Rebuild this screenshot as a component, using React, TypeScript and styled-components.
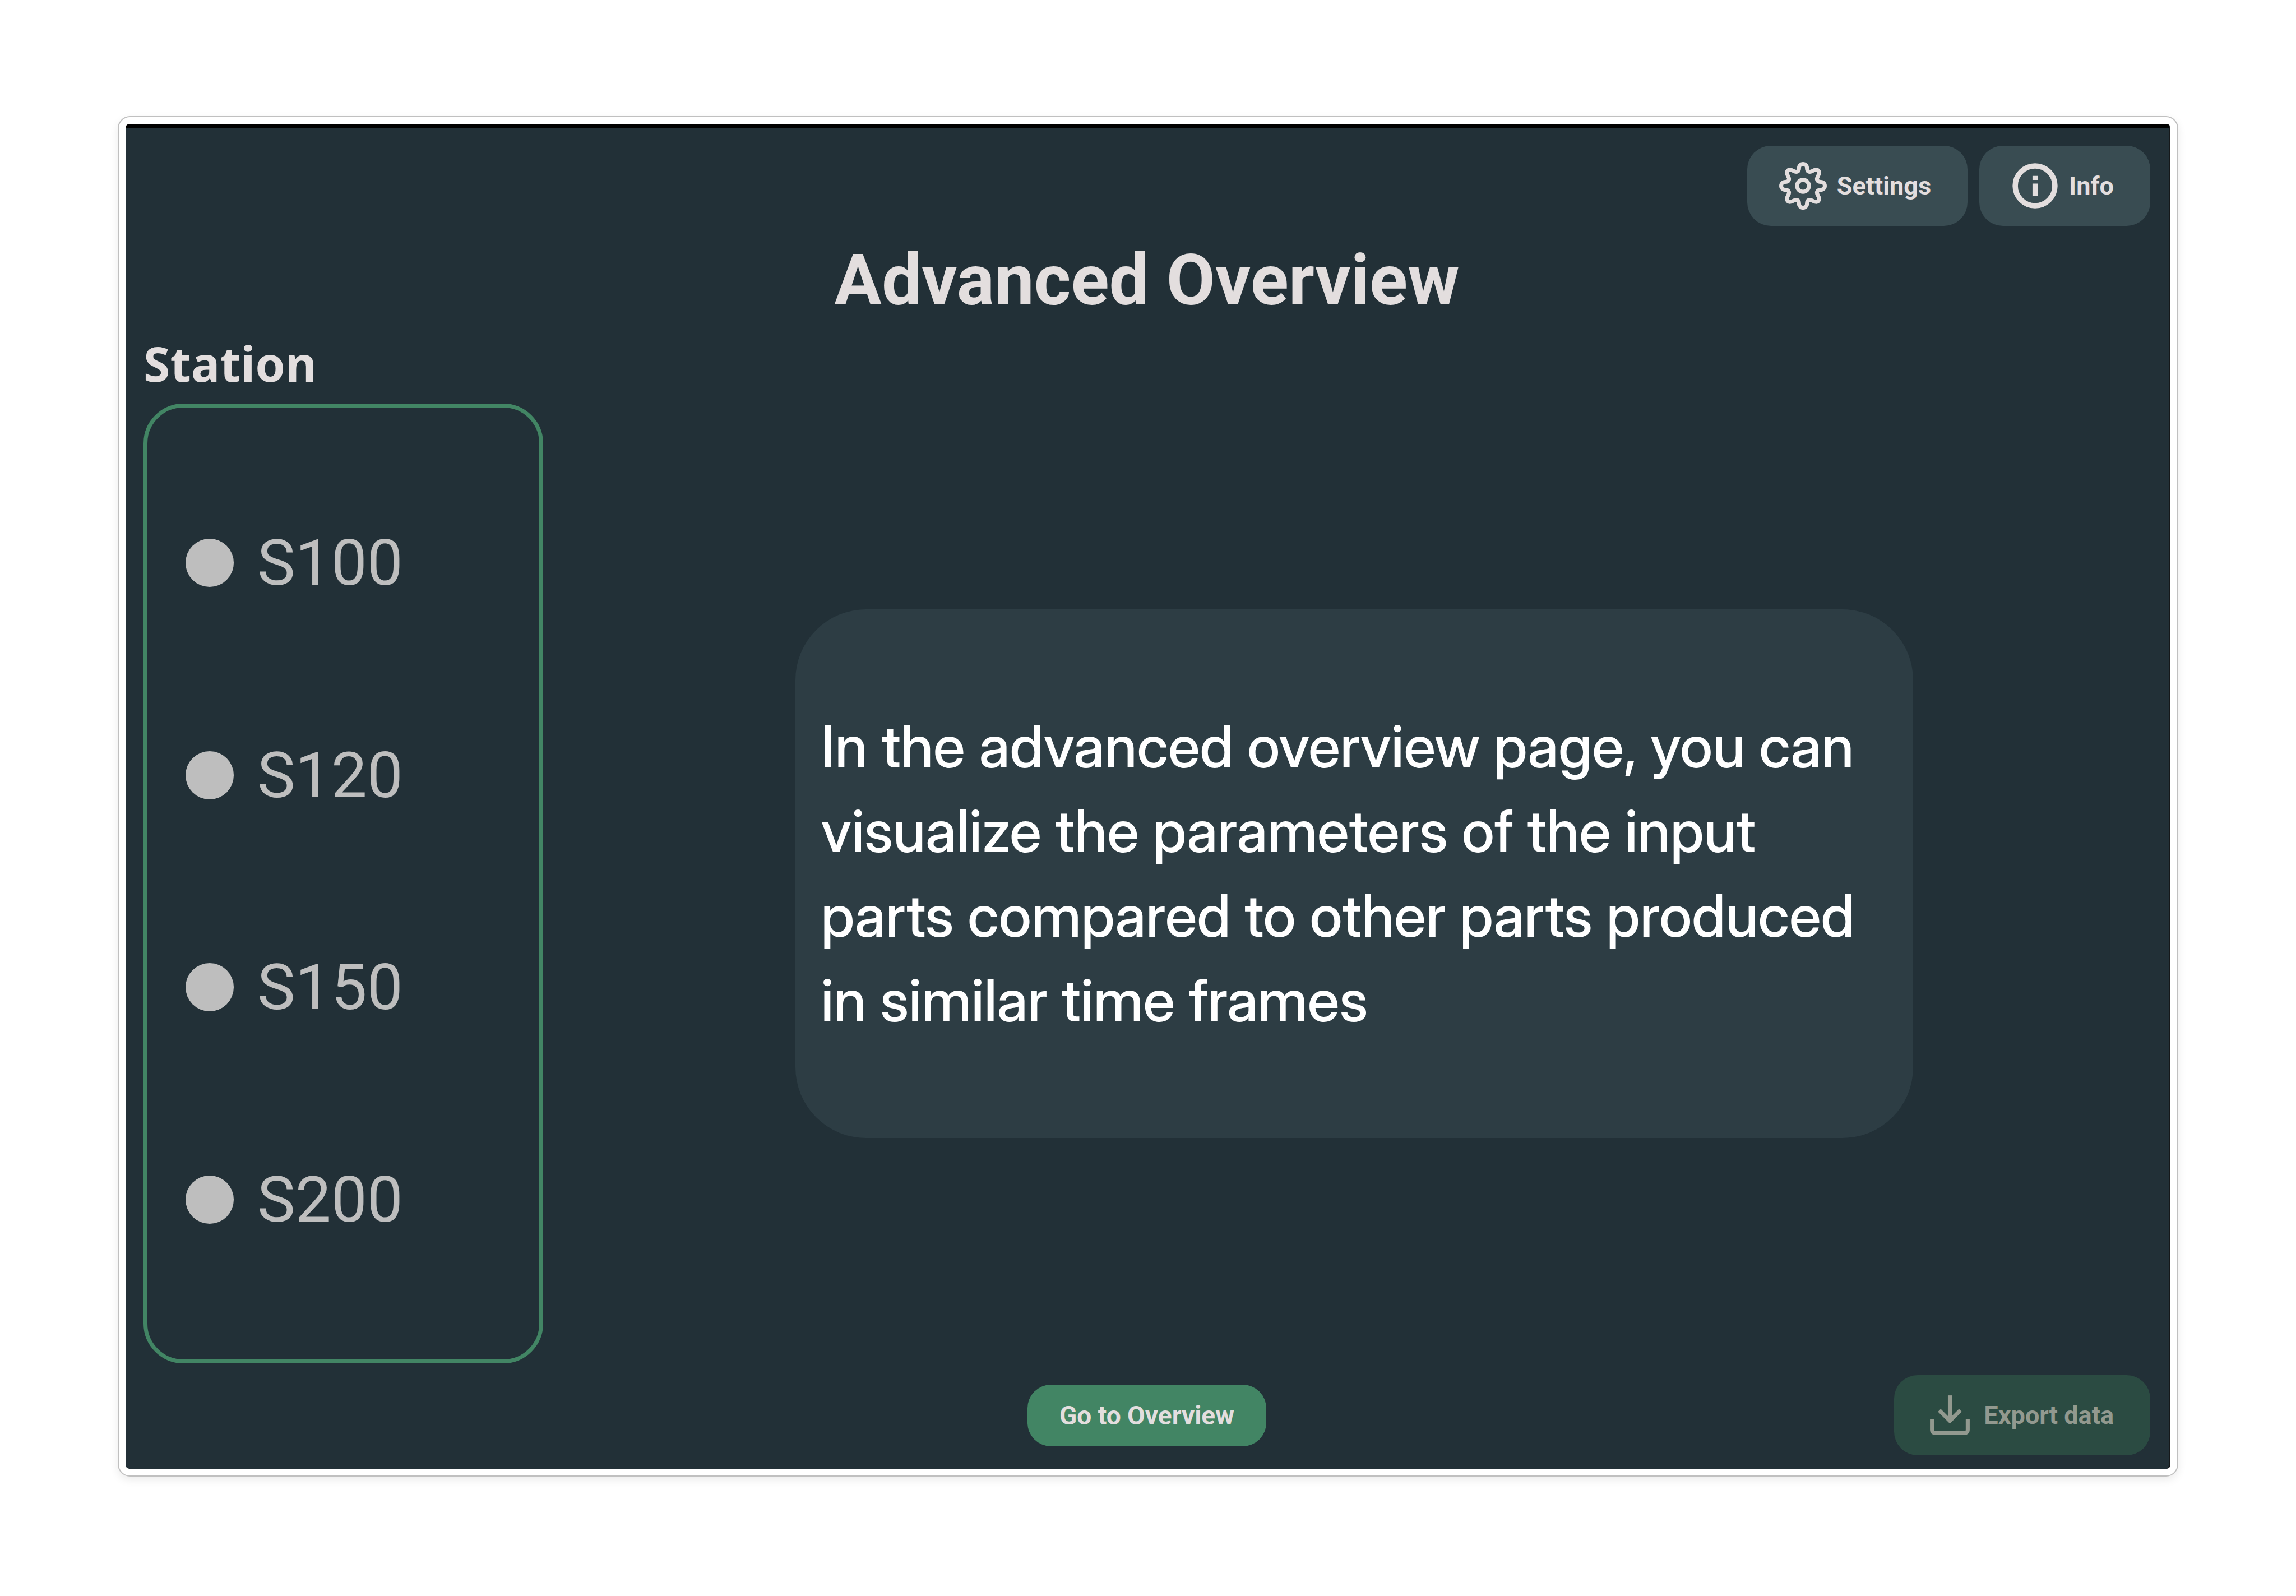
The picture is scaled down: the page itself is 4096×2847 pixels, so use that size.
import React from "react";
import styled, { createGlobalStyle } from "styled-components";

const GlobalStyle = createGlobalStyle`
  *, *::before, *::after { box-sizing: border-box; }
  body { margin: 0; background: #ffffff; font-family: Roboto, "Liberation Sans", sans-serif; }
  h1, h2, p { margin: 0; }
`;

const Page = styled.div`
  min-height: 100vh;
  padding: 207px 210px 213px;
  display: flex;
`;

const Frame = styled.div`
  flex: 1;
  display: flex;
  padding: 12px;
  border: 2px solid #c0c0c0;
  border-radius: 22px;
  background: #ffffff;
  box-shadow: 0 6px 16px rgba(0, 0, 0, 0.08);
`;

const Screen = styled.main`
  flex: 1;
  display: flex;
  flex-direction: column;
  border-top: 7px solid #000000;
  border-right: 3px solid #15181a;
  border-radius: 7px;
  background: #223037;
  padding: 32px 33px 24px 32px;
`;

const TopBar = styled.header`
  display: flex;
  justify-content: flex-end;
  gap: 21px;
`;

const Button = styled.button<{ $tone: "slate" | "green" | "muted"; $compact?: boolean }>`
  display: flex;
  align-items: center;
  gap: 18px;
  height: ${(p) => (p.$compact ? 110 : 143)}px;
  padding: 0 ${(p) => (p.$compact ? 57 : 65)}px 0 57px;
  border: 0;
  border-radius: 42px;
  font: bold ${(p) => (p.$compact ? 46 : 45)}px/56px Roboto, "Liberation Sans", sans-serif;
  white-space: nowrap;
  color: ${(p) => (p.$tone === "muted" ? "#92998f" : "#e3dede")};
  background: ${(p) => ({ slate: "#394c52", green: "#428564", muted: "#2b4b42" })[p.$tone]};
`;

const Icon = styled.svg`
  width: 85px;
  height: 85px;
  flex: none;
  fill: none;
  stroke: currentColor;
  stroke-width: 2;
`;

const Title = styled.h1`
  font-size: 126px;
  line-height: 148px;
  font-weight: 700;
  text-align: center;
  margin-top: 23px;
  color: #e3dede;
`;

const Content = styled.div`
  flex: 1;
  display: flex;
`;

const StationColumn = styled.section`
  display: flex;
  flex-direction: column;
  width: 713px;
`;

const StationHeading = styled.h2`
  font: bold 86px/120px "Noto Sans", "Open Sans", sans-serif;
  margin-top: 14px;
  color: #e3dede;
`;

const StationList = styled.div`
  flex: 1;
  display: flex;
  flex-direction: column;
  justify-content: space-around;
  margin-top: 12px;
  padding: 88px 68px 96px;
  border: 7px solid #428564;
  border-radius: 71px;
`;

const Option = styled.label`
  display: flex;
  align-items: center;
  gap: 42px;
  font-size: 114px;
  line-height: 134px;
  color: #bebebe;
`;

const Radio = styled.input`
  appearance: none;
  width: 86px;
  height: 86px;
  margin: 0;
  border-radius: 50%;
  background: #bebebe;
  &:checked { background: #428564; }
`;

const Stage = styled.section`
  flex: 1;
  display: flex;
  align-items: center;
  justify-content: center;
  padding: 110px 0 0 26px;
`;

const Card = styled.div`
  display: flex;
  align-items: center;
  width: 1994px;
  min-height: 943px;
  padding: 0 46px;
  border-radius: 126px;
  background: #2d3d44;
`;

const CardText = styled.p`
  font: 500 104px/151px "Inter Display", Inter, sans-serif;
  color: #ffffff;
`;

const Footer = styled.footer`
  display: grid;
  grid-template-columns: 1fr auto 1fr;
  align-items: center;
  margin-top: 21px;
  & > :last-child { grid-column: 3; justify-self: end; }
  & > :first-child { grid-column: 2; }
`;

const stations = ["S100", "S120", "S150", "S200"];

function GearIcon() {
  return (
    <Icon viewBox="0 0 24 24" aria-hidden="true">
      <circle cx="12" cy="12" r="3" />
      <path d="M10 3A2 2 0 0 1 14 3C14 4.8 15.2 5.4 16.6 4.6C18 3.8 19 3.6 19.7 4.3C20.4 5 20.2 6 19.4 7.4C18.6 8.8 19.2 10 21 10A2 2 0 0 1 21 14C19.2 14 18.6 15.2 19.4 16.6C20.2 18 20.4 19 19.7 19.7C19 20.4 18 20.2 16.6 19.4C15.2 18.6 14 19.2 14 21A2 2 0 0 1 10 21C10 19.2 8.8 18.6 7.4 19.4C6 20.2 5 20.4 4.3 19.7C3.6 19 3.8 18 4.6 16.6C5.4 15.2 4.8 14 3 14A2 2 0 0 1 3 10C4.8 10 5.4 8.8 4.6 7.4C3.8 6 3.6 5 4.3 4.3C5 3.6 6 3.8 7.4 4.6C8.8 5.4 10 4.8 10 3Z" />
    </Icon>
  );
}

function InfoIcon() {
  return (
    <Icon viewBox="0 0 24 24" aria-hidden="true">
      <circle cx="12" cy="12" r="10" strokeWidth="2.7" />
      <path d="M12 10.9V17M12 7v2" strokeWidth="2.6" />
    </Icon>
  );
}

function DownloadIcon() {
  return (
    <Icon viewBox="0 0 24 24" aria-hidden="true">
      <path d="M12 2v13" />
      <path d="M6.7 9.5 12 14.8l5.3-5.3" />
      <path d="M3 14v5.5A1.5 1.5 0 0 0 4.5 21h15a1.5 1.5 0 0 0 1.5-1.5V14" />
    </Icon>
  );
}

export default function App() {
  return (
    <>
      <GlobalStyle />
      <Page>
        <Frame>
          <Screen>
            <TopBar>
              <Button type="button" $tone="slate">
                <GearIcon />
                Settings
              </Button>
              <Button type="button" $tone="slate">
                <InfoIcon />
                Info
              </Button>
            </TopBar>
            <Title>Advanced Overview</Title>
            <Content>
              <StationColumn>
                <StationHeading>Station</StationHeading>
                <StationList role="radiogroup" aria-label="Station">
                  {stations.map((s) => (
                    <Option key={s}>
                      <Radio type="radio" name="station" value={s} />
                      {s}
                    </Option>
                  ))}
                </StationList>
              </StationColumn>
              <Stage>
                <Card>
                  <CardText>
                    In the advanced overview page, you can visualize the parameters of the input
                    parts compared to other parts produced in similar time frames
                  </CardText>
                </Card>
              </Stage>
            </Content>
            <Footer>
              <Button type="button" $tone="green" $compact>
                Go to Overview
              </Button>
              <Button type="button" $tone="muted" disabled>
                <DownloadIcon />
                Export data
              </Button>
            </Footer>
          </Screen>
        </Frame>
      </Page>
    </>
  );
}
